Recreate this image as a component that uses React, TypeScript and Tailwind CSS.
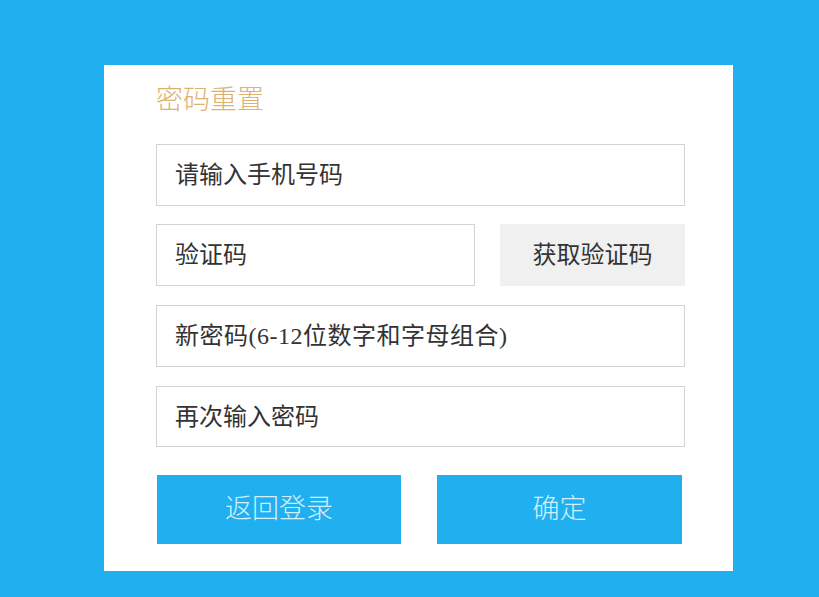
import React from "react";

const font = { fontFamily: '"Liberation Serif", "Noto Sans CJK SC", serif' };

export default function App() {
  return (
    <div
      className="w-[819px] h-[597px] bg-[#21b0ef] pt-[65px] pl-[104px] overflow-hidden"
      style={font}
    >
      <div className="w-[629px] h-[506px] bg-white pt-[17px] pl-[52px] pr-[48px] flex flex-col">
        <div className="h-[36px] leading-[36px] text-[27px] font-light text-[#ddb173]">密码重置</div>
        <div className="mt-[26px] h-[62px] border border-[#d2d2d2] flex items-center pl-[18px] text-[24px] text-[#333]">
          请输入手机号码
        </div>
        <div className="mt-[18px] h-[62px] flex justify-between">
          <div className="w-[319px] h-full border border-[#d2d2d2] flex items-center pl-[18px] text-[24px] text-[#333]">
            验证码
          </div>
          <div className="w-[185px] h-full bg-[#f0f0f0] flex items-center justify-center text-[24px] text-[#333]">
            获取验证码
          </div>
        </div>
        <div className="mt-[19px] h-[62px] border border-[#d2d2d2] flex items-center pl-[18px] text-[24px] text-[#333] tracking-[0.5px]">
          新密码(6-12位数字和字母组合)
        </div>
        <div className="mt-[19px] h-[61px] border border-[#d2d2d2] flex items-center pl-[18px] text-[24px] text-[#333]">
          再次输入密码
        </div>
        <div className="mt-[28px] h-[69px] flex gap-[36px] pl-[1px]">
          <div className="w-[244px] h-full bg-[#21b0ef] flex items-center justify-center text-[27px] font-light text-[#d4effc]">
            返回登录
          </div>
          <div className="w-[245px] h-full bg-[#21b0ef] flex items-center justify-center text-[27px] font-light text-[#d4effc]">
            确定
          </div>
        </div>
      </div>
    </div>
  );
}
